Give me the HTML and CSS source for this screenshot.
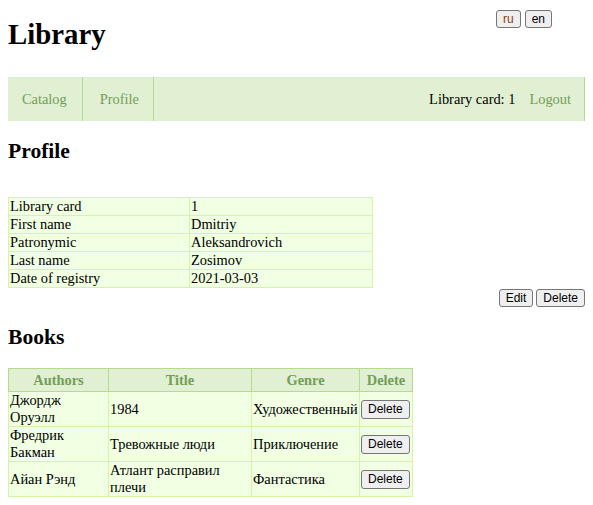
FILE: index.html
```html
<!DOCTYPE html>
<html lang="en">
<head>
<meta charset="utf-8">
<title>Library</title>
<link rel="stylesheet" href="styles.css">
</head>
<body>
<header class="header">
  <h1 class="title">Library</h1>
  <div class="lang">
    <button class="btn btn-active">ru</button>
    <button class="btn">en</button>
  </div>
</header>
<nav class="nav">
  <a class="nav-item" href="#">Catalog</a>
  <a class="nav-item nav-item-wide" href="#">Profile</a>
  <span class="nav-spacer"></span>
  <span class="nav-card">Library card: 1</span>
  <a class="nav-logout" href="#">Logout</a>
</nav>

<h2 class="section-title">Profile</h2>
<table class="profile-table">
  <colgroup><col class="pcol1"><col class="pcol2"></colgroup>
  <tr><td>Library card</td><td>1</td></tr>
  <tr><td>First name</td><td>Dmitriy</td></tr>
  <tr><td>Patronymic</td><td>Aleksandrovich</td></tr>
  <tr><td>Last name</td><td>Zosimov</td></tr>
  <tr><td>Date of registry</td><td>2021-03-03</td></tr>
</table>
<div class="actions">
  <button class="btn">Edit</button>
  <button class="btn">Delete</button>
</div>

<h2 class="section-title books-title">Books</h2>
<table class="books-table">
  <colgroup>
    <col class="c-authors"><col class="c-title"><col class="c-genre"><col class="c-delete">
  </colgroup>
  <thead>
    <tr><th>Authors</th><th>Title</th><th>Genre</th><th>Delete</th></tr>
  </thead>
  <tbody>
    <tr><td>Джордж Оруэлл</td><td>1984</td><td>Художественный</td><td><button class="btn">Delete</button></td></tr>
    <tr><td>Фредрик Бакман</td><td>Тревожные люди</td><td>Приключение</td><td><button class="btn">Delete</button></td></tr>
    <tr><td>Айан Рэнд</td><td>Атлант расправил плечи</td><td>Фантастика</td><td><button class="btn">Delete</button></td></tr>
  </tbody>
</table>
</body>
</html>
```

FILE: styles.css
```css
body {
  margin: 8px;
  font-family: "Liberation Serif", "Times New Roman", serif;
  font-size: 14.4px;
  color: #000;
  background: #fff;
}

.header {
  display: flex;
  justify-content: space-between;
  align-items: flex-start;
}

.title {
  margin: 10px 0 0;
  font-size: 28.8px;
  line-height: 33px;
  font-weight: bold;
}

.lang {
  display: flex;
  gap: 4px;
  margin: 2px 33px 0 0;
}

.btn {
  font-family: "Liberation Sans", Arial, sans-serif;
  font-size: 12px;
  line-height: 14.4px;
  padding: 1px 6px;
  border: 1px solid #767676;
  border-radius: 3px;
  background: #efefef;
  color: #000;
  margin: 0;
}

.btn-active {
  color: #8f3a10;
}

.nav {
  display: flex;
  align-items: stretch;
  height: 44px;
  margin-top: 26px;
  background: #e1efd2;
}

.nav-item {
  display: flex;
  align-items: center;
  padding: 0 15px 0 14px;
  border-right: 1px solid #b4dc8c;
  color: #739e58;
  text-decoration: none;
}

.nav-item-wide {
  padding: 0 14px 0 17px;
}

.nav-spacer {
  flex: 1;
}

.nav-card {
  display: flex;
  align-items: center;
  margin-right: 14px;
}

.nav-logout {
  display: flex;
  align-items: center;
  padding-right: 13px;
  border-right: 1px solid #b4dc8c;
  color: #739e58;
  text-decoration: none;
}

.section-title {
  font-size: 21.6px;
  line-height: 25px;
  font-weight: bold;
  margin: 18px 0 18px;
}

.profile-table {
  margin-top: 33px;
  border-collapse: collapse;
  table-layout: fixed;
  width: 364px;
  background: #f1ffe3;
}

.pcol1 { width: 181px; }
.pcol2 { width: 183px; }

.profile-table td {
  border: 1px solid #d4f5a8;
  padding: 0 1px;
  line-height: 17px;
}

.actions {
  display: flex;
  justify-content: flex-end;
  gap: 3px;
  margin-top: 1px;
}

.books-title {
  margin-bottom: 18px;
}

.books-table {
  border-collapse: collapse;
  table-layout: fixed;
  width: 404px;
  background: #f1ffe3;
}

.c-authors { width: 100px; }
.c-title { width: 143px; }
.c-genre { width: 108px; }
.c-delete { width: 53px; }

.books-table th {
  background: #e1efd2;
  border: 1px solid #b4dc8c;
  color: #739e58;
  font-weight: bold;
  text-align: center;
  padding: 3px 1px 2px;
  line-height: 17px;
}

.books-table td {
  border: 1px solid #d4f5a8;
  padding: 0 1px;
  line-height: 17px;
  vertical-align: middle;
  text-align: left;
}
```
